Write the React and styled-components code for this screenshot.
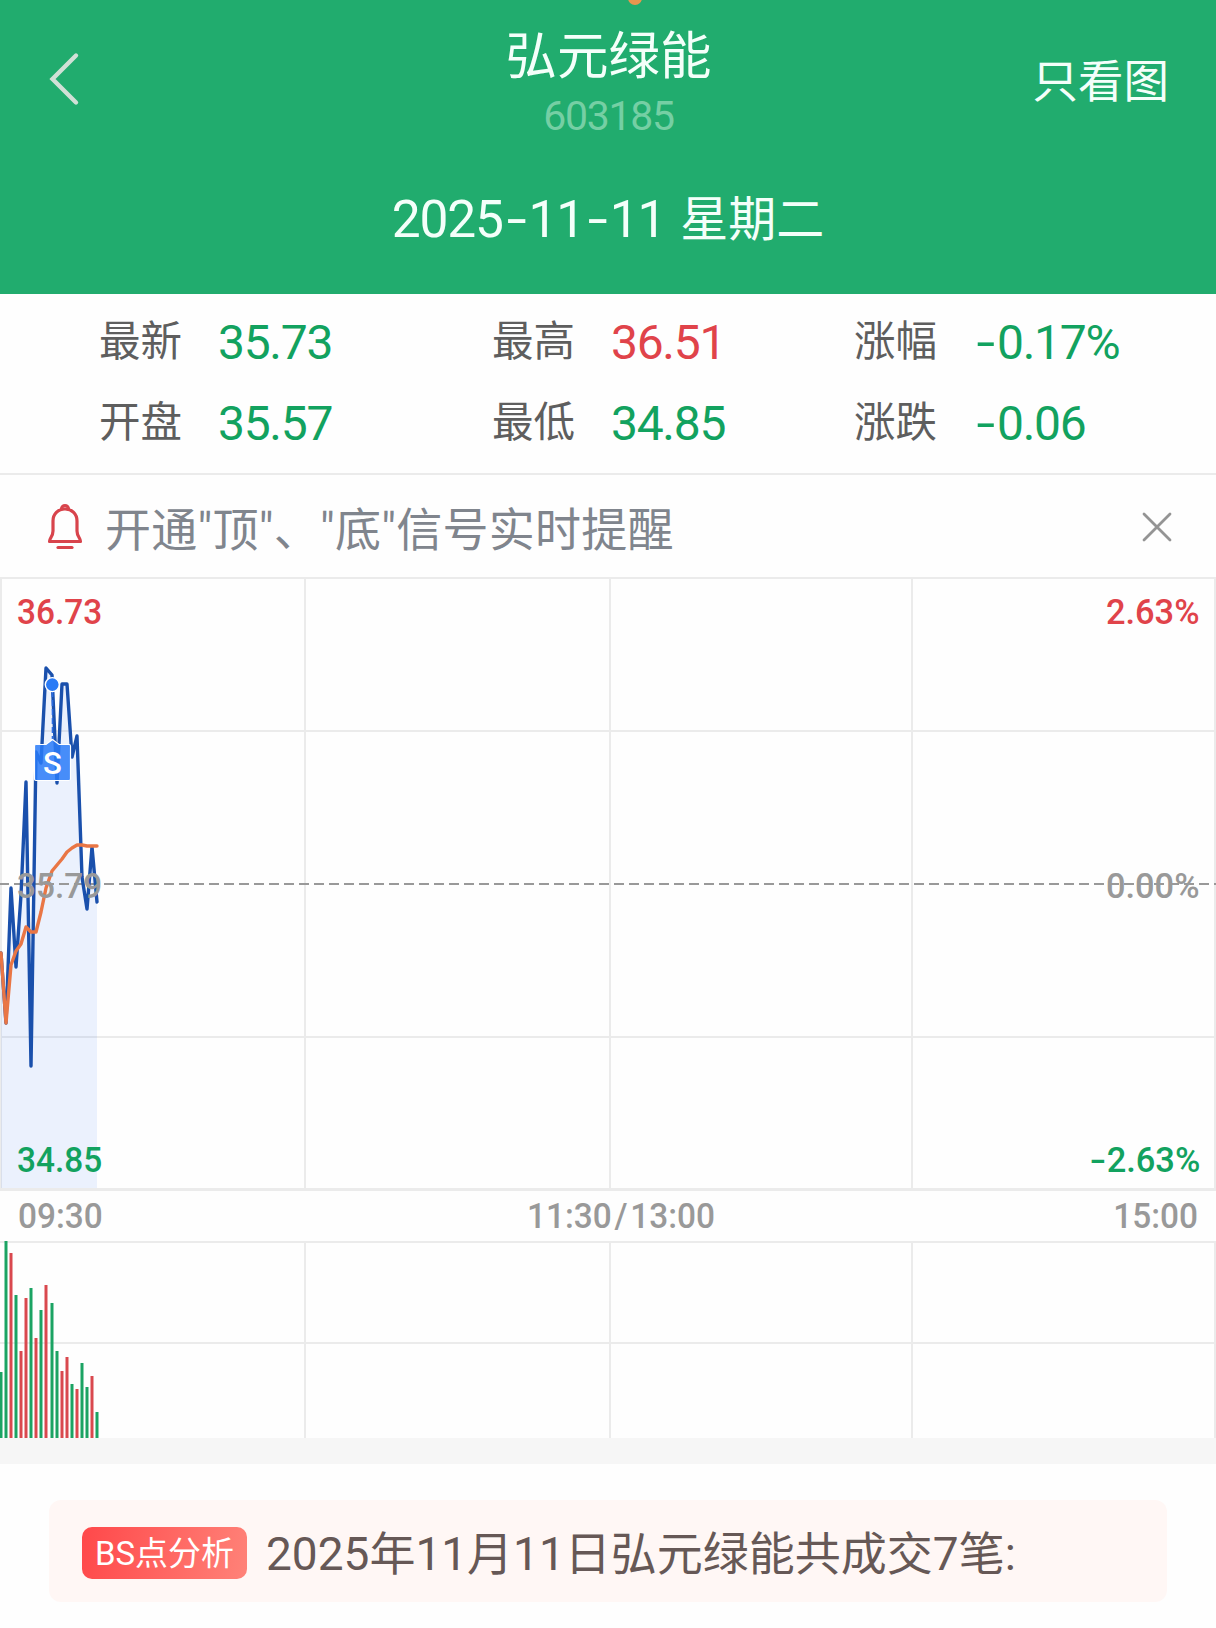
import React from "react";
import styled, { createGlobalStyle } from "styled-components";

const GREEN = "#12a25f";
const RED = "#e0434a";

const stats = [
  { id: 1, label: "最新", value: "35.73", color: GREEN },
  { id: 2, label: "最高", value: "36.51", color: RED },
  { id: 3, label: "涨幅", value: "-0.17%", color: GREEN },
  { id: 4, label: "开盘", value: "35.57", color: GREEN },
  { id: 5, label: "最低", value: "34.85", color: GREEN },
  { id: 6, label: "涨跌", value: "-0.06", color: GREEN },
];

// one entry per minute: x, price y, average y (chart units)
const minutes = [
  [1, 376, 376],
  [6, 446, 446],
  [11, 311, 388],
  [16, 390, 374],
  [21, 318, 367],
  [26, 205, 350],
  [31, 489, 355],
  [36, 175, 355],
  [41, 186, 335],
  [46, 91, 311],
  [52, 98, 294],
  [57, 206, 288],
  [62, 107, 282],
  [67, 107, 275],
  [72, 180, 271],
  [77, 159, 268],
  [82, 300, 268],
  [87, 332, 269],
  [92, 270, 269],
  [97, 325, 269],
];

const volumes = [
  [1, 131, "g"],
  [6, 0, "g"],
  [11, 12, "r"],
  [16, 54, "g"],
  [21, 110, "r"],
  [26, 57, "r"],
  [31, 47, "g"],
  [36, 97, "r"],
  [41, 69, "g"],
  [46, 44, "r"],
  [52, 62, "g"],
  [57, 110, "g"],
  [62, 130, "r"],
  [67, 116, "r"],
  [72, 143, "g"],
  [77, 148, "r"],
  [82, 122, "g"],
  [87, 146, "g"],
  [92, 135, "r"],
  [97, 171, "g"],
];

const columns = [0, 304, 609, 911, 1214];

const Num = ({ text }) =>
  text
    .split(/(-)/)
    .filter(Boolean)
    .map((part, i) => (part === "-" ? <Dash key={i}>-</Dash> : part));

const PriceChart = () => {
  const price = minutes.map(([x, y]) => `${x},${y}`).join(" ");
  const average = minutes.map(([x, , y]) => `${x},${y}`).join(" ");

  return (
    <PricePanel>
      <Plot viewBox="0 0 1216 614" $height={614}>
        <g fill="#ebebeb">
          <rect x="0" y="0" width="1216" height="2" />
          <rect x="0" y="153" width="1216" height="2" />
          <rect x="0" y="459" width="1216" height="2" />
          <rect x="0" y="611" width="1216" height="3" />
          {columns.map((x) => (
            <rect key={x} x={x} y="0" width="2" height="611" />
          ))}
        </g>
        <polygon
          points={`1,611 ${price} 97,611`}
          fill="#2f72f2"
          fillOpacity="0.09"
        />
        <line
          x1="-1"
          y1="307"
          x2="1216"
          y2="307"
          stroke="#999"
          strokeWidth="2"
          strokeDasharray="10 5"
        />
        <g fill="none" strokeLinejoin="round" strokeLinecap="round">
          <polyline points={price} stroke="#1a50ac" strokeWidth="3.4" />
          <polyline points={average} stroke="#e97645" strokeWidth="3.4" />
        </g>
        <line
          x1="52.5"
          y1="114"
          x2="52.5"
          y2="162"
          stroke="#2a6be0"
          strokeWidth="1.6"
          strokeDasharray="6 3"
        />
        <circle
          cx="52.3"
          cy="107.6"
          r="7"
          fill="#2a7bf6"
          stroke="#fff"
          strokeWidth="1.4"
        />
        <path
          d="M36 167.5H46L52.5 162.5L59 167.5H69Q70.5 167.5 70.5 169V202Q70.5 203.5 69 203.5H36Q34.500 203.5 34.500 202V169Q34.500 167.5 36 167.5Z"
          fill="#2a7bf8"
          fillOpacity="0.85"
          stroke="#fff"
          strokeWidth="1.2"
        />
      </Plot>
      <Marker>S</Marker>
      <Scale>
        <ScaleRow $color={RED}>
          <Price>36.73</Price>
          <Percent>2.63%</Percent>
        </ScaleRow>
        <ScaleRow $color="#999">
          <Price>35.79</Price>
          <Percent>0.00%</Percent>
        </ScaleRow>
        <ScaleRow $color={GREEN}>
          <Price>34.85</Price>
          <Percent>
            <Num text="-2.63%" />
          </Percent>
        </ScaleRow>
      </Scale>
    </PricePanel>
  );
};

const VolumeChart = () => (
  <Plot viewBox="0 0 1216 197" $height={197}>
    <g fill="#ebebeb">
      <rect x="0" y="0" width="1216" height="2" />
      <rect x="0" y="101" width="1216" height="2" />
      {columns.slice(1).map((x) => (
        <rect key={x} x={x} y="0" width="2" height="197" />
      ))}
    </g>
    {volumes.map(([x, top, side]) => (
      <rect
        key={x}
        x={x - 1.5}
        y={top}
        width="3"
        height={197 - top}
        fill={side === "g" ? "#1ba363" : "#d9484e"}
      />
    ))}
  </Plot>
);

const App = () => {
  return (
    <>
      <GlobalStyle />
      <Page>
        <Header>
          <StatusDot />
          <TopBar>
            <BackButton aria-label="返回">
              <svg width="32" height="54" viewBox="0 0 32 54">
                <path
                  d="M28 3.500L4.500 27L28 50.500"
                  fill="none"
                  stroke="#d0e0d6"
                  strokeWidth="4.4"
                  strokeLinecap="round"
                />
              </svg>
            </BackButton>
            <Title>
              <Name>弘元绿能</Name>
              <Code>603185</Code>
            </Title>
            <ViewButton>只看图</ViewButton>
          </TopBar>
          <DateLine>
            <DateNumber>
              <Num text="2025-11-11" />
            </DateNumber>
            <span>星期二</span>
          </DateLine>
        </Header>

        <Stats>
          {stats.map((curElem) => {
            const { id, label, value, color } = curElem;
            return (
              <Stat key={id}>
                <StatLabel>{label}</StatLabel>
                <StatValue $color={color}>
                  <Num text={value} />
                </StatValue>
              </Stat>
            );
          })}
        </Stats>

        <Notice>
          <svg width="38" height="48" viewBox="0 0 38 48">
            <g
              fill="none"
              stroke="#d8444c"
              strokeWidth="3.2"
              strokeLinecap="round"
              strokeLinejoin="round"
            >
              <path d="M3.500 38.500H34.500C34.500 35 31 33.500 31 28V18C31 11 26 6 19 6S7 11 7 18V28C7 33.500 3.500 35 3.500 38.500Z" />
              <path d="M15.500 6C15.500 1.500 22.500 1.500 22.500 6" />
              <path d="M12 44.500H26" />
            </g>
          </svg>
          <NoticeText>开通"顶"、"底"信号实时提醒</NoticeText>
          <CloseButton aria-label="关闭">
            <svg width="32" height="32" viewBox="0 0 32 32">
              <path
                d="M3 3L29 29M29 3L3 29"
                stroke="#949494"
                strokeWidth="2.8"
                strokeLinecap="round"
              />
            </svg>
          </CloseButton>
        </Notice>

        <PriceChart />
        <TimeAxis>
          <Time $origin="left">09:30</Time>
          <Time $origin="center">
            11:30<Slash>/</Slash>13:00
          </Time>
          <Time $origin="right">15:00</Time>
        </TimeAxis>
        <VolumeChart />

        <Divider />
        <Analysis>
          <Badge>BS点分析</Badge>
          <AnalysisText>2025年11月11日弘元绿能共成交7笔:</AnalysisText>
        </Analysis>
      </Page>
    </>
  );
};

const GlobalStyle = createGlobalStyle`
  * {
    box-sizing: border-box;
  }
  body {
    margin: 0;
    background: #fff;
    font-family: Roboto, "Noto Sans CJK SC", sans-serif;
  }
  button {
    padding: 0;
    border: 0;
    background: none;
    font: inherit;
  }
  svg {
    display: block;
  }
`;

const Page = styled.div`
  width: 1216px;
  height: 1628px;
  overflow: hidden;
  background: #fefefe;
`;

const Header = styled.header`
  position: relative;
  height: 294px;
  overflow: hidden;
  background: #21ac6e;
  color: #f4fffa;
`;

const StatusDot = styled.i`
  position: absolute;
  top: -9px;
  left: 628px;
  width: 14px;
  height: 14px;
  border-radius: 50%;
  background: #e8954f;
`;

const TopBar = styled.div`
  display: grid;
  grid-template-columns: 1fr auto 1fr;
  align-items: center;
  height: 158px;
  padding: 0 47px 0 48px;
`;

const BackButton = styled.button`
  justify-self: start;
`;

const Title = styled.div`
  text-align: center;
`;

const Name = styled.h1`
  margin: 10px 0 0;
  font-size: 51.5px;
  font-weight: 400;
  line-height: 64px;
`;

const Code = styled.div`
  font-size: 41px;
  letter-spacing: -1.3px;
  line-height: 54px;
  color: #75cfa4;
`;

const ViewButton = styled.button`
  justify-self: end;
  padding-top: 7px;
  font-size: 45.5px;
  line-height: 60px;
  color: inherit;
`;

const DateLine = styled.div`
  display: flex;
  justify-content: center;
  align-items: center;
  gap: 15px;
  height: 124px;
  font-size: 48px;
  line-height: 60px;
`;

const DateNumber = styled.span`
  font-size: 51.5px;
  letter-spacing: -1.2px;
`;

const Dash = styled.span`
  display: inline-block;
  width: 0.5em;
  text-align: center;
  transform: scaleX(1.4);
`;

const Stats = styled.section`
  display: grid;
  grid-template-columns: 393px 362px 1fr;
  grid-auto-rows: 81px;
  height: 181px;
  padding: 8px 0 0 99px;
  border-bottom: 2px solid #ebebeb;
`;

const Stat = styled.div`
  display: flex;
  align-items: center;
`;

const StatLabel = styled.span`
  width: 119px;
  padding-bottom: 1px;
  font-size: 41.5px;
  line-height: 50px;
  color: #5e5e5e;
`;

const StatValue = styled.span`
  font-size: 48px;
  line-height: 60px;
  letter-spacing: -1.3px;
  color: ${({ $color }) => $color};
`;

const Notice = styled.section`
  display: flex;
  align-items: center;
  height: 102px;
  padding: 2px 43px 0 46px;
`;

const NoticeText = styled.span`
  flex: 1;
  margin-left: 21px;
  padding-top: 5px;
  font-size: 46px;
  line-height: 60px;
  letter-spacing: 0.25px;
  color: #80858d;
`;

const CloseButton = styled.button``;

const PricePanel = styled.section`
  position: relative;
`;

const Plot = styled.svg`
  width: 1216px;
  height: ${({ $height }) => $height}px;
`;

const Scale = styled.div`
  position: absolute;
  inset: 15px 16px 11px 17px;
  display: flex;
  flex-direction: column;
  justify-content: space-between;
`;

const ScaleRow = styled.div`
  display: flex;
  justify-content: space-between;
  font-size: 35.5px;
  font-weight: 500;
  line-height: 40px;
  color: ${({ $color }) => $color};
`;

const Price = styled.span`
  transform: scaleX(0.94);
  transform-origin: left;
`;

const Percent = styled.span`
  transform: scaleX(0.97);
  transform-origin: right;
`;

const Marker = styled.b`
  position: absolute;
  top: 168px;
  left: 35px;
  width: 35px;
  font-size: 31px;
  font-weight: 500;
  line-height: 37px;
  text-align: center;
  color: #fff;
`;

const TimeAxis = styled.div`
  display: grid;
  grid-template-columns: 1fr auto 1fr;
  height: 50px;
  padding: 0 18px;
  font-size: 35.5px;
  font-weight: 500;
  line-height: 51px;
  color: #999;
`;

const Time = styled.span`
  margin-left: ${({ $origin }) => ($origin === "center" ? "26px" : 0)};
  text-align: ${({ $origin }) => $origin};
  transform: scaleX(0.94);
  transform-origin: ${({ $origin }) => $origin};
`;

const Slash = styled.span`
  margin: 0 3px;
`;

const Divider = styled.div`
  height: 26px;
  background: #f6f6f6;
`;

const Analysis = styled.section`
  display: flex;
  align-items: center;
  height: 102px;
  margin: 36px 49px 0;
  padding: 4px 33px 0;
  border-radius: 12px;
  background: #fff7f5;
`;

const Badge = styled.span`
  width: 165px;
  height: 52px;
  border-radius: 10px;
  background: linear-gradient(100deg, #ff484a, #ff8278);
  font-size: 33px;
  line-height: 54px;
  text-align: center;
  color: #fff;
`;

const AnalysisText = styled.span`
  margin-left: 19px;
  padding-top: 1px;
  font-size: 46px;
  line-height: 60px;
  color: #665856;
`;

export default App;
